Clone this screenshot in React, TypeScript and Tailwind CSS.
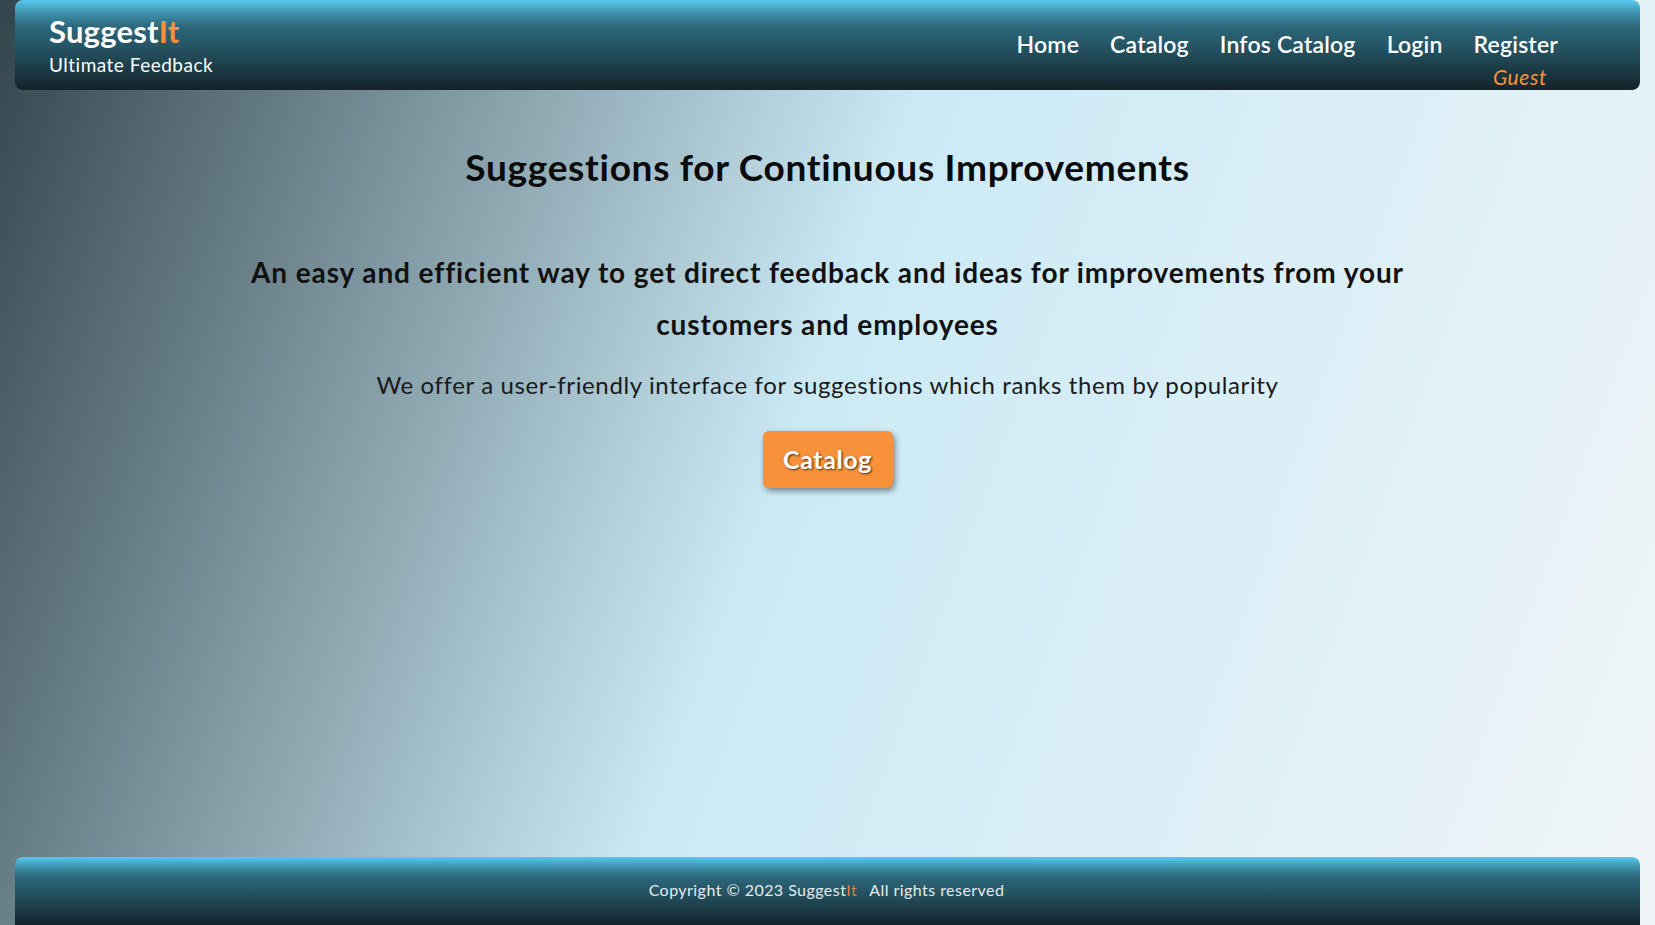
import React from 'react';

const navLinks = ['Home', 'Catalog', 'Infos Catalog', 'Login', 'Register'];

const barGradient =
    'bg-[linear-gradient(to_bottom,#58c9ef_0%,#3f93ae_14%,#2c6679_30%,#265666_50%,#1d3d48_75%,#14232a_100%)]';

const Header: React.FC = () => (
    <header className={`mx-[15px] h-[90px] rounded-lg ${barGradient} flex items-start justify-between pl-[34px] pr-[82px]`}>
        <div className="pt-[12px]">
            <h1 className="text-[31px] leading-[38px] font-bold text-white tracking-[0.2px]">
                Suggest<span className="text-[#f7913a]">It</span>
            </h1>
            <p className="mt-[2px] text-[19px] leading-[26px] text-white tracking-[0.5px]">Ultimate Feedback</p>
        </div>
        <nav className="flex flex-col items-end pt-[29px]">
            <ul className="flex items-center gap-[31px]">
                {navLinks.map((link) => (
                    <li key={link}>
                        <a href="#" className="text-[23px] leading-[30px] font-semibold text-white tracking-[0.2px]">
                            {link}
                        </a>
                    </li>
                ))}
            </ul>
            <span className="mt-[5px] text-[21px] leading-[26px] italic text-[#f7913a] tracking-[0.6px] mr-[11px]">Guest</span>
        </nav>
    </header>
);

const Footer: React.FC = () => (
    <footer className={`mx-[15px] h-[68px] rounded-t-lg ${barGradient} flex items-center justify-center`}>
        <p className="pr-[2px] text-[16px] leading-[20px] text-[#e4ebee] tracking-[0.45px] -mt-[2px]">
            Copyright © 2023 Suggest<span className="text-[#e07b3a]">It</span>
            <span className="ml-[12px]">All rights reserved</span>
        </p>
    </footer>
);

export default function App() {
    return (
        <div
            className="min-h-screen flex flex-col bg-[linear-gradient(110deg,#33454c_0%,#cbeaf6_48%,#f0f5f7_100%)]"
            style={{ fontFamily: 'Lato, "Noto Sans", sans-serif' }}
        >
            <Header />

            <main className="flex-1 flex flex-col items-center text-center pt-[55px]">
                <h2 className="text-[37px] leading-[44px] font-bold text-[#0a0a0a] tracking-[0.7px]">
                    Suggestions for Continuous Improvements
                </h2>
                <h3 className="mt-[57px] max-w-[1200px] text-[28px] leading-[52px] font-bold text-[#111] tracking-[0.9px]">
                    An easy and efficient way to get direct feedback and ideas for improvements from your customers and employees
                </h3>
                <p className="mt-[19px] text-[24px] leading-[32px] text-[#1a1a1a] tracking-[0.63px]">
                    We offer a user-friendly interface for suggestions which ranks them by popularity
                </p>
                <button
                    type="button"
                    className="mt-[30px] w-[130px] h-[57px] rounded-md bg-[#f7913a] text-white text-[25px] font-bold tracking-[0.6px] shadow-[2px_3px_6px_rgba(0,0,0,0.45)] [text-shadow:1px_1px_2px_rgba(0,0,0,0.7)]"
                >
                    Catalog
                </button>
            </main>

            <Footer />
        </div>
    );
}
